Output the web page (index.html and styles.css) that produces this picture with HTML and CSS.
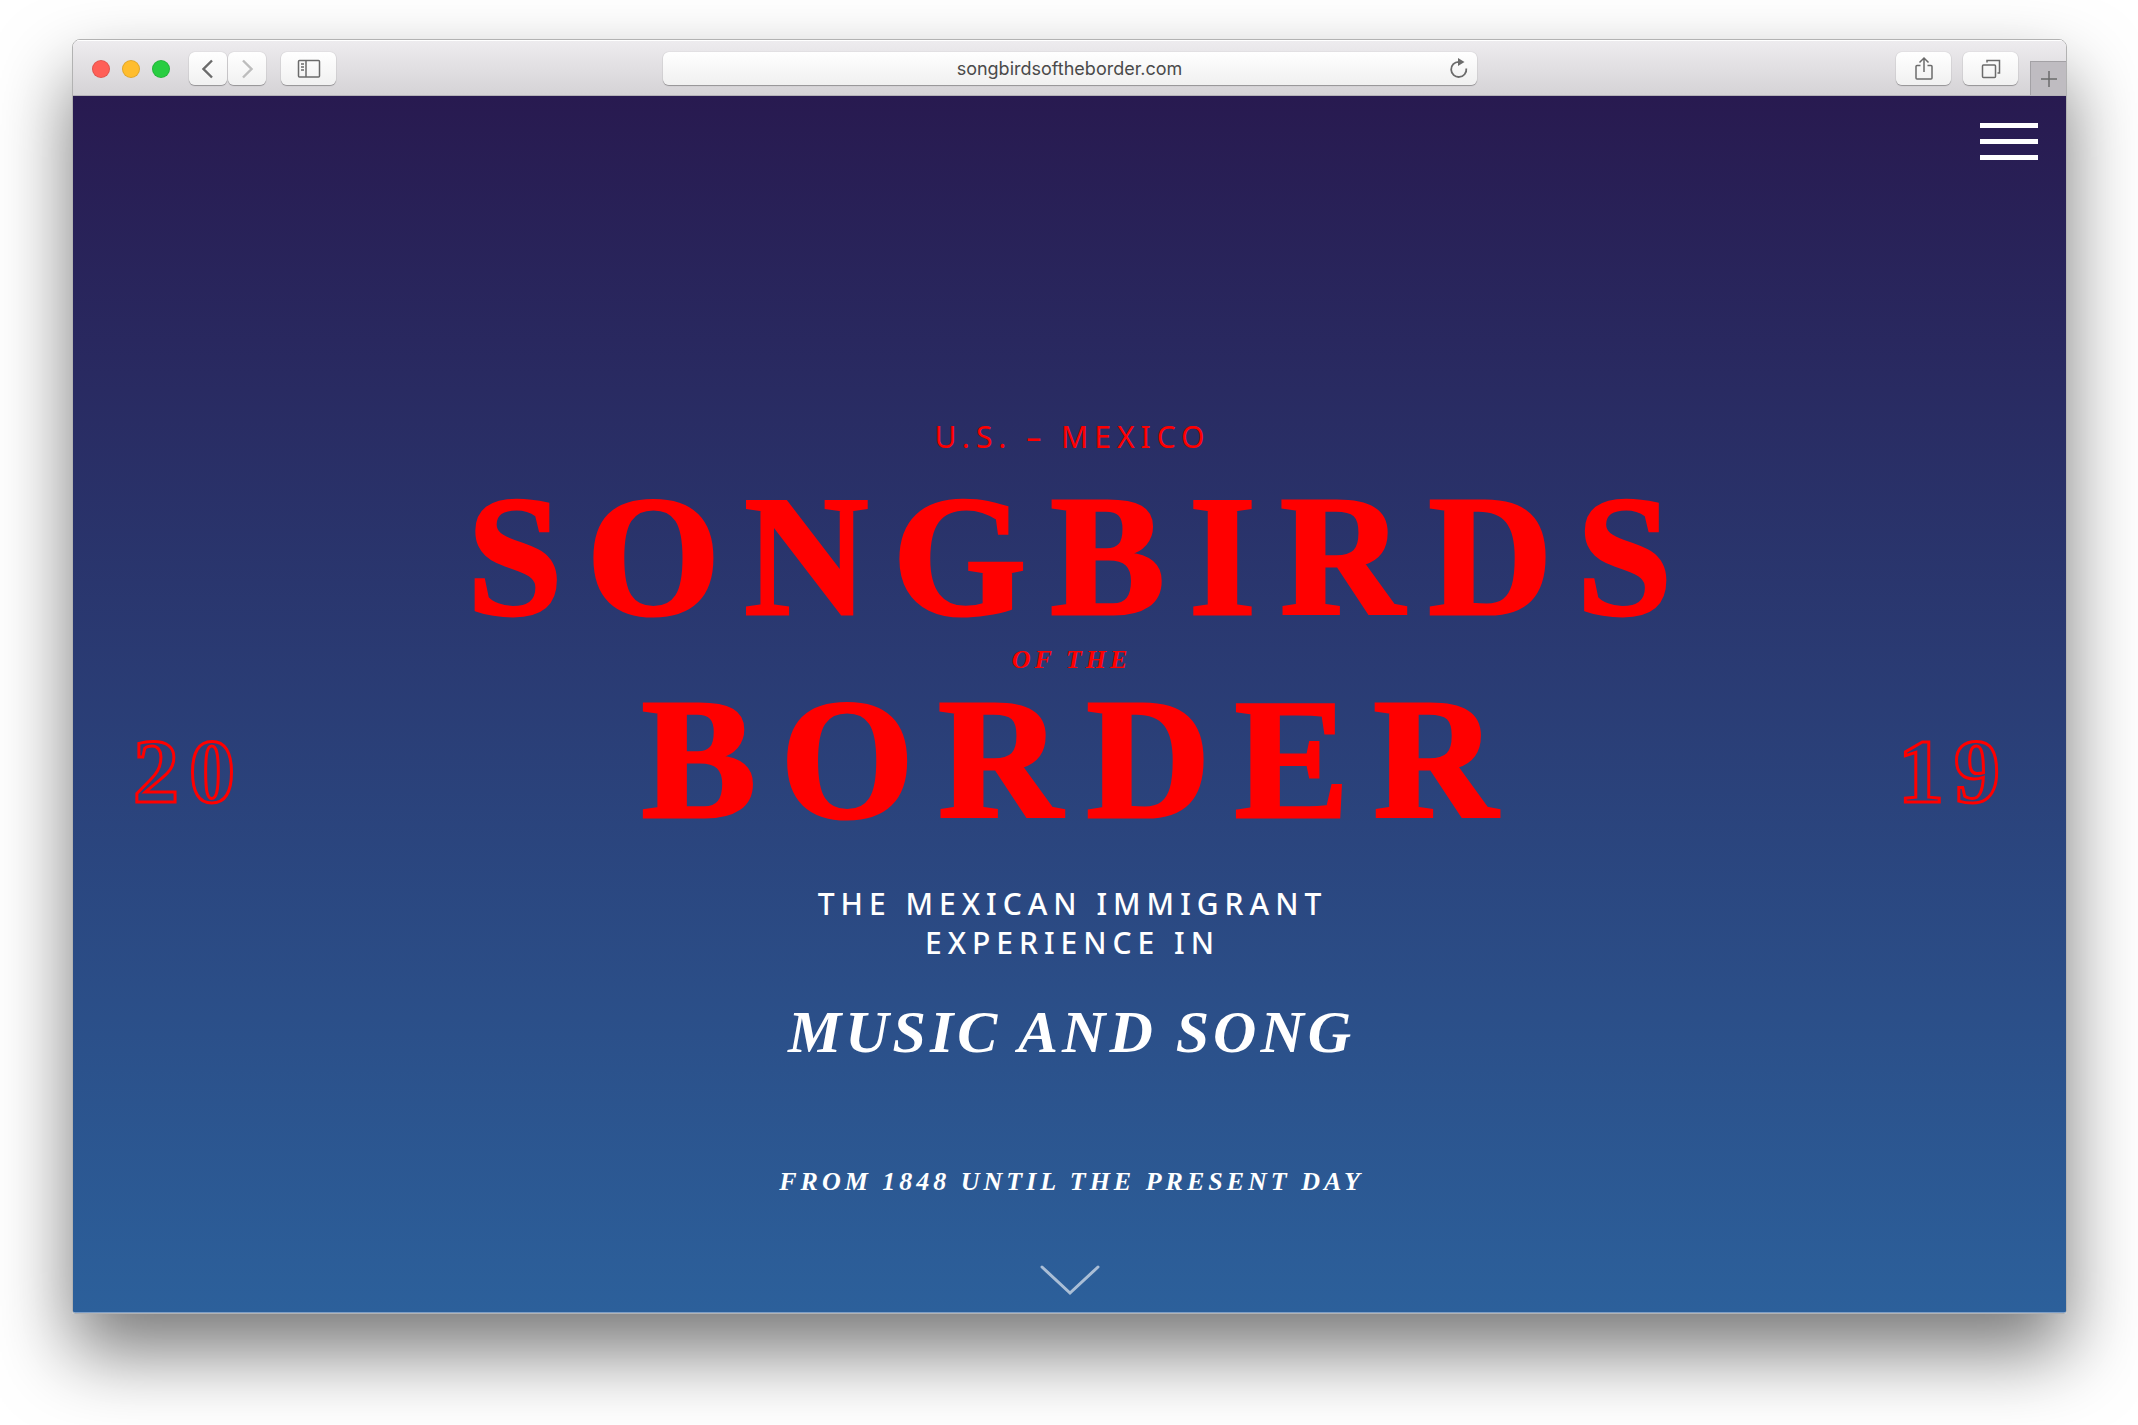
FILE: index.html
```html
<!DOCTYPE html>
<html lang="en">
<head>
    <meta charset="UTF-8">
    <meta name="viewport" content="width=device-width, initial-scale=1.0">
    <title>Songbirds of the Border</title>
    <link rel="stylesheet" href="styles.css">
</head>
<body>
    <div class="window">
        <div class="toolbar">
            <div class="tools">
                <div class="lights">
                    <span class="light red"></span>
                    <span class="light yellow"></span>
                    <span class="light green"></span>
                </div>
                <div class="nav">
                    <button class="tool half" aria-label="Back">
                        <svg width="12" height="20" viewBox="0 0 12 20"><path d="M10 1.500 L1.500 10 L10 18.500" stroke-width="2.4"/></svg>
                    </button>
                    <button class="tool half" aria-label="Forward" disabled>
                        <svg width="12" height="20" viewBox="0 0 12 20"><path d="M2 1.500 L10.500 10 L2 18.500" stroke-width="2.4"/></svg>
                    </button>
                </div>
                <button class="tool" aria-label="Sidebar">
                    <svg width="24" height="20" viewBox="0 0 24 20"><rect x="1.5" y="1.5" width="21" height="16.5" rx="1"/><path d="M9 1.5V18M4 5h3M4 8h3M4 11h3"/></svg>
                </button>
            </div>
            <div class="address">
                <input type="text" class="url" aria-label="Address" value="songbirdsoftheborder.com">
                <button class="reload" aria-label="Reload">
                    <svg width="20" height="22" viewBox="0 0 20 22"><path d="M17.3 11.5A7.6 7.6 0 1 1 9.7 4.8" stroke-width="1.8"/><path class="solid" d="M9 1 L15.5 5 L9 9 Z"/></svg>
                </button>
            </div>
            <div class="tools right">
                <button class="tool" aria-label="Share">
                    <svg width="20" height="26" viewBox="0 0 20 26"><path d="M6.500 9.500H3a1 1 0 0 0-1 1V22a1 1 0 0 0 1 1h14a1 1 0 0 0 1-1V10.500a1 1 0 0 0-1-1h-3.500M10 16V2M5.500 6.500 10 2l4.500 4.500"/></svg>
                </button>
                <button class="tool" aria-label="Show all tabs">
                    <svg width="20" height="20" viewBox="0 0 20 20"><rect x="1.500" y="6" width="13" height="12.500" rx="1"/><path d="M6 3.500V1.500h12.500V14h-2"/></svg>
                </button>
                <button class="new-tab" aria-label="New tab">
                    <svg width="18" height="18" viewBox="0 0 18 18"><path d="M9 1V17M1 9H17"/></svg>
                </button>
            </div>
        </div>

        <div class="page">
            <header class="site-header">
                <button class="menu" aria-label="Menu">
                    <span></span>
                    <span></span>
                    <span></span>
                </button>
            </header>
            <main class="hero">
                <div class="year">20</div>
                <div class="hero-text">
                    <p class="place">U.S. – MEXICO</p>
                    <h1>
                        <span class="big">SONGBIRDS</span>
                        <span class="small">OF THE</span>
                        <span class="big">BORDER</span>
                    </h1>
                    <p class="about">THE MEXICAN IMMIGRANT<br>EXPERIENCE IN</p>
                    <h2>MUSIC AND SONG</h2>
                    <p class="period">FROM 1848 UNTIL THE PRESENT DAY</p>
                    <a class="scroll" href="#" aria-label="Scroll down">
                        <svg width="60" height="32" viewBox="0 0 60 32"><path d="M2 3 L30 29 L58 3"/></svg>
                    </a>
                </div>
                <div class="year end">19</div>
            </main>
        </div>
    </div>
</body>
</html>
```

FILE: styles.css
```css
* {
    margin: 0;
    padding: 0;
    box-sizing: border-box;
}
body {
    min-height: 100vh;
    display: flex;
    padding: 39px 71px 111px 72px;
    background: #fff;
    font-family: "Liberation Serif", serif;
}
button {
    border: none;
    background: none;
    cursor: pointer;
}
svg {
    display: block;
    fill: none;
    stroke: #6b6b6b;
    stroke-width: 1.5;
}
.window {
    flex: 1;
    display: flex;
    flex-direction: column;
    border: 1px solid rgba(0, 0, 0, 0.3);
    background-clip: padding-box;
    border-radius: 8px 8px 3px 3px;
    box-shadow: 0 38px 74px rgba(0, 0, 0, 0.53);
    overflow: hidden;
}

/* Browser bar */
.toolbar {
    display: grid;
    grid-template-columns: 1fr minmax(0, 814px) 1fr;
    height: 56px;
    padding-top: 2px;
    background: linear-gradient(#eeecef, #d5d3d6);
    border-bottom: 1px solid #b5b3b8;
    box-shadow: inset 0 1px 0 #fff;
}
.tools {
    display: flex;
    align-items: center;
    padding-left: 19px;
}
.lights {
    display: flex;
    gap: 12px;
    margin-right: 19px;
}
.light {
    width: 18px;
    height: 18px;
    border-radius: 50%;
    border: 1px solid rgba(0, 0, 0, 0.12);
}
.red {
    background: #ff5f57;
}
.yellow {
    background: #ffbd2e;
}
.green {
    background: #28cd41;
}
.nav {
    display: flex;
    gap: 1px;
    margin-right: 15px;
}
.tool {
    display: flex;
    align-items: center;
    justify-content: center;
    width: 55px;
    height: 33px;
    border-radius: 6px;
    background: linear-gradient(#fff, #f1f1f1);
    box-shadow: 0 0 1px rgba(0, 0, 0, 0.3), 0 1px 1px rgba(0, 0, 0, 0.3);
}
.half {
    width: 38px;
}
.tool:disabled svg {
    stroke: #bdbdbd;
}
.address {
    align-self: center;
    position: relative;
}
.url {
    display: block;
    width: 100%;
    height: 33px;
    border: none;
    border-radius: 6px;
    background: linear-gradient(#fff, #f0f0f0);
    box-shadow: 0 0 1px rgba(0, 0, 0, 0.3), 0 1px 1px rgba(0, 0, 0, 0.3);
    font: 18px Inter, sans-serif;
    text-align: center;
    color: #4a4a4a;
}
.reload {
    position: absolute;
    top: 5px;
    right: 8px;
}
.solid {
    fill: #6b6b6b;
    stroke: none;
}
.right {
    justify-content: flex-end;
    gap: 12px;
}
.new-tab {
    align-self: flex-end;
    display: flex;
    align-items: center;
    justify-content: center;
    width: 36px;
    height: 34px;
    background: #bfbcc1;
    border-top: 1px solid #a3a1a5;
    border-left: 1px solid #a3a1a5;
}

/* Page */
.page {
    flex: 1;
    display: flex;
    flex-direction: column;
    background: linear-gradient(#281a50, #2c609b);
    border-bottom: 1px solid #7f9fc6;
}
.site-header {
    display: flex;
    justify-content: flex-end;
    padding: 27px 28px 0;
}
.menu {
    display: flex;
    flex-direction: column;
    gap: 11px;
}
.menu span {
    width: 58px;
    height: 5px;
    background: #fff;
}
.hero {
    flex: 1;
    display: grid;
    grid-template-columns: 1fr auto 1fr;
    align-items: center;
    padding: 86px 56px 16px;
}
.year {
    font-size: 92px;
    font-weight: bold;
    line-height: 92px;
    letter-spacing: 10px;
    padding-left: 4px;
    color: transparent;
    -webkit-text-stroke: 3px #f00;
}
.end {
    justify-self: end;
}
.hero-text {
    align-self: end;
    display: flex;
    flex-direction: column;
    align-items: center;
    text-align: center;
    color: #fff;
}
.place,
.about {
    font-family: "Noto Sans", sans-serif;
    font-size: 30px;
    line-height: 39px;
    letter-spacing: 6px;
    padding-left: 6px;
}
.place {
    color: #f00;
    margin-bottom: 32px;
}
.about {
    font-weight: 500;
    margin-bottom: 38px;
}
h1 {
    display: flex;
    flex-direction: column;
    align-items: center;
    color: #f00;
    margin-bottom: 57px;
}
.big {
    font-size: 172px;
    line-height: 136px;
    letter-spacing: 24px;
    padding-left: 24px;
    -webkit-text-stroke: 3px #f00;
}
.small,
.period {
    font-size: 26px;
    font-style: italic;
    font-weight: bold;
    line-height: 32px;
    letter-spacing: 4px;
    padding-left: 4px;
}
.small {
    margin: 20px 0 15px;
}
h2 {
    font-size: 60px;
    font-style: italic;
    line-height: 64px;
    letter-spacing: 4px;
    padding-left: 4px;
    margin-bottom: 102px;
}
.period {
    margin-bottom: 66px;
}
.scroll svg {
    stroke: rgba(255, 255, 255, 0.6);
    stroke-width: 3;
    stroke-linecap: round;
}
```
